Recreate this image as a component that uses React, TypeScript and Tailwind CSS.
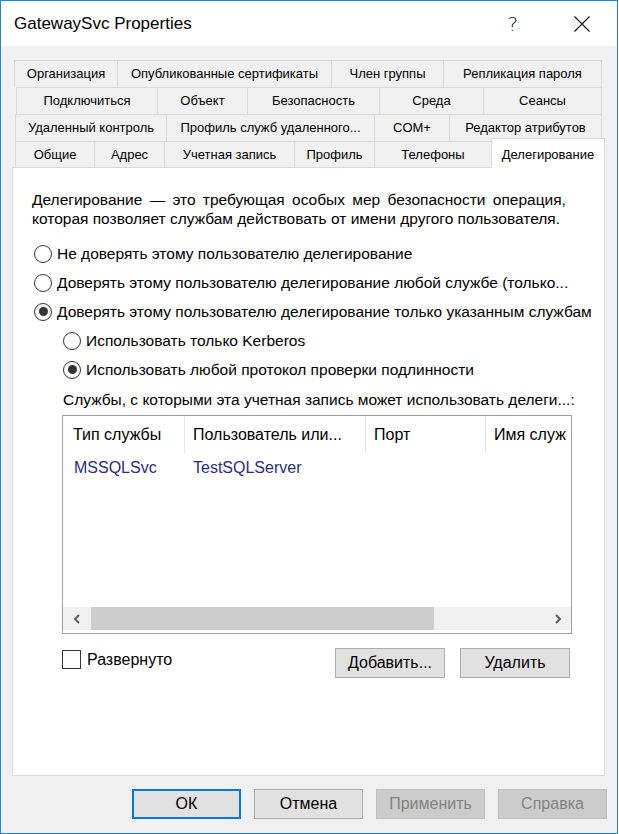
import React from "react";

function Radio({ checked }: { checked?: boolean }) {
  return (
    <span className="w-[18px] h-[18px] rounded-full border border-[#333333] bg-white flex items-center justify-center shrink-0">
      {checked && <span className="w-[9px] h-[9px] rounded-full bg-[#333333]" />}
    </span>
  );
}

type Tab = { label: string; w: number };

const rows: { pl: string; tabs: Tab[] }[] = [
  {
    pl: "pl-[13px]",
    tabs: [
      { label: "Организация", w: 103 },
      { label: "Опубликованные сертификаты", w: 214 },
      { label: "Член группы", w: 112 },
      { label: "Репликация пароля", w: 159 },
    ],
  },
  {
    pl: "pl-[15px]",
    tabs: [
      { label: "Подключиться", w: 141 },
      { label: "Объект", w: 90 },
      { label: "Безопасность", w: 132 },
      { label: "Среда", w: 104 },
      { label: "Сеансы", w: 119 },
    ],
  },
  {
    pl: "pl-[14px]",
    tabs: [
      { label: "Удаленный контроль", w: 151 },
      { label: "Профиль служб удаленного...", w: 208 },
      { label: "COM+", w: 75 },
      { label: "Редактор атрибутов", w: 153 },
    ],
  },
];

const row4: Tab[] = [
  { label: "Общие", w: 79 },
  { label: "Адрес", w: 70 },
  { label: "Учетная запись", w: 130 },
  { label: "Профиль", w: 80 },
  { label: "Телефоны", w: 117 },
];

function TabCell({ t, last }: { t: Tab; last?: boolean }) {
  return (
    <div
      style={{ width: t.w }}
      className={
        "h-full flex items-center justify-center border-t border-l border-[#d9d9d9] bg-[#f0f0f0] text-[13px] text-black whitespace-nowrap " +
        (last ? "border-r" : "")
      }
    >
      {t.label}
    </div>
  );
}

function Btn({
  children,
  w,
  variant,
}: {
  children: React.ReactNode;
  w: string;
  variant?: "default" | "primary" | "disabled";
}) {
  const base = "h-[30px] flex items-center justify-center text-[16px] " + w + " ";
  if (variant === "primary")
    return <div className={base + "border-2 border-[#0078d7] bg-[#e1e1e1] text-black"}>{children}</div>;
  if (variant === "disabled")
    return <div className={base + "border border-[#bfbfbf] bg-[#cccccc] text-[#838383]"}>{children}</div>;
  return <div className={base + "border border-[#adadad] bg-[#e1e1e1] text-black"}>{children}</div>;
}

export default function App() {
  return (
    <div className="w-[619px] h-[834px] bg-white">
      <div className="w-[618px] h-[834px] border border-[#1a84d8] bg-[#f0f0f0] flex flex-col font-['Liberation_Sans',Arial,sans-serif] text-black">
        {/* Title bar */}
        <div className="h-[45px] bg-white flex items-center pl-[13px] shrink-0">
          <span className="text-[17px] leading-none">GatewaySvc Properties</span>
          <span className="ml-auto text-[20px] leading-none font-['DejaVu_Sans',sans-serif] font-extralight text-[#111]">?</span>
          <svg className="ml-[56px] mr-[27px]" width="16" height="16" viewBox="0 0 16 16">
            <path d="M0.5 0.5 L15.5 15.5 M15.5 0.5 L0.5 15.5" stroke="#111" strokeWidth="1.1" fill="none" />
          </svg>
        </div>

        {/* Tabs */}
        <div className="mt-[14px] flex flex-col">
          {rows.map((r, i) => (
            <div key={i} className={"h-[27px] flex " + r.pl}>
              {r.tabs.map((t, j) => (
                <TabCell key={j} t={t} last={j === r.tabs.length - 1} />
              ))}
            </div>
          ))}
          <div className="h-[26px] flex pl-[14px]">
            {row4.map((t, j) => (
              <TabCell key={j} t={t} />
            ))}
            <div className="relative z-10 -mt-[3px] h-[30px] w-[114px] bg-white border-t border-l border-r border-[#d9d9d9] flex items-start justify-center pt-[6px] text-[13px] whitespace-nowrap">
              Делегирование
            </div>
          </div>
        </div>

        {/* Panel */}
        <div className="ml-[11px] w-[593px] h-[609px] bg-white border border-[#d9d9d9] flex flex-col text-[15.5px] shrink-0">
          <div className="pt-[22px] pl-[19px] leading-[19px] whitespace-nowrap">
            <div className="[word-spacing:3px]">Делегирование — это требующая особых мер безопасности операция,</div>
            <div>которая позволяет службам действовать от имени другого пользователя.</div>
          </div>

          <div className="mt-[11px] flex flex-col">
            <div className="h-[29px] flex items-center gap-[5px] pl-[21px] whitespace-nowrap">
              <Radio />
              <span>Не доверять этому пользователю делегирование</span>
            </div>
            <div className="h-[29px] flex items-center gap-[5px] pl-[21px] whitespace-nowrap">
              <Radio />
              <span>Доверять этому пользователю делегирование любой службе (только...</span>
            </div>
            <div className="h-[29px] flex items-center gap-[5px] pl-[21px] whitespace-nowrap">
              <Radio checked />
              <span>Доверять этому пользователю делегирование только указанным службам</span>
            </div>
            <div className="h-[29px] flex items-center gap-[5px] pl-[50px] whitespace-nowrap">
              <Radio />
              <span>Использовать только Kerberos</span>
            </div>
            <div className="h-[29px] flex items-center gap-[5px] pl-[50px] whitespace-nowrap">
              <Radio checked />
              <span>Использовать любой протокол проверки подлинности</span>
            </div>
          </div>

          <div className="mt-[6px] h-[20px] flex items-center pl-[50px] whitespace-nowrap">
            Службы, с которыми эта учетная запись может использовать делеги...:
          </div>

          {/* List view */}
          <div className="mt-[5px] ml-[49px] w-[510px] h-[219px] border border-[#a0a0a0] flex flex-col overflow-hidden text-[16px]">
            <div className="h-[37px] flex shrink-0 whitespace-nowrap">
              <div className="w-[122px] shrink-0 border-r border-[#e5e5e5] flex items-center pl-[10px]">Тип службы</div>
              <div className="w-[181px] shrink-0 border-r border-[#e5e5e5] flex items-center pl-[8px]">Пользователь или...</div>
              <div className="w-[120px] shrink-0 border-r border-[#e5e5e5] flex items-center pl-[8px]">Порт</div>
              <div className="flex-1 overflow-hidden flex items-center pl-[8px]">Имя служ</div>
            </div>
            <div className="mt-[5px] h-[20px] flex items-center whitespace-nowrap text-[#2b2b80] shrink-0">
              <div className="w-[122px] shrink-0 pl-[11px]">MSSQLSvc</div>
              <div className="w-[181px] shrink-0 pl-[8px]">TestSQLServer</div>
            </div>
            <div className="flex-1" />
            <div className="h-[23px] bg-[#f0f0f0] flex items-center shrink-0">
              <div className="w-[27px] h-full flex items-center justify-center">
                <svg width="8" height="10" viewBox="0 0 8 10">
                  <path d="M6 1 L2 5 L6 9" stroke="#606060" strokeWidth="2" fill="none" />
                </svg>
              </div>
              <div className="ml-[1px] w-[343px] h-full bg-[#cdcdcd]" />
              <div className="flex-1" />
              <div className="w-[27px] h-full flex items-center justify-center">
                <svg width="8" height="10" viewBox="0 0 8 10">
                  <path d="M2 1 L6 5 L2 9" stroke="#606060" strokeWidth="2" fill="none" />
                </svg>
              </div>
            </div>
            <div className="h-[3px] shrink-0" />
          </div>

          <div className="mt-[14px] ml-[49px] w-[510px] flex items-start text-[16px]">
            <div className="mt-[2px] flex items-center gap-[6px] whitespace-nowrap">
              <span className="w-[19px] h-[19px] border border-[#333333] bg-white" />
              <span className="leading-[19px]">Развернуто</span>
            </div>
            <div className="ml-auto mr-[2px] flex gap-[15px]">
              <Btn w="w-[110px]">Добавить...</Btn>
              <Btn w="w-[110px]">Удалить</Btn>
            </div>
          </div>
        </div>

        {/* Bottom buttons */}
        <div className="mt-[13px] flex justify-end gap-[13px] pr-[10px]">
          <Btn w="w-[109px]" variant="primary">ОК</Btn>
          <Btn w="w-[109px]">Отмена</Btn>
          <Btn w="w-[109px]" variant="disabled">Применить</Btn>
          <Btn w="w-[109px]" variant="disabled">Справка</Btn>
        </div>
      </div>
    </div>
  );
}
